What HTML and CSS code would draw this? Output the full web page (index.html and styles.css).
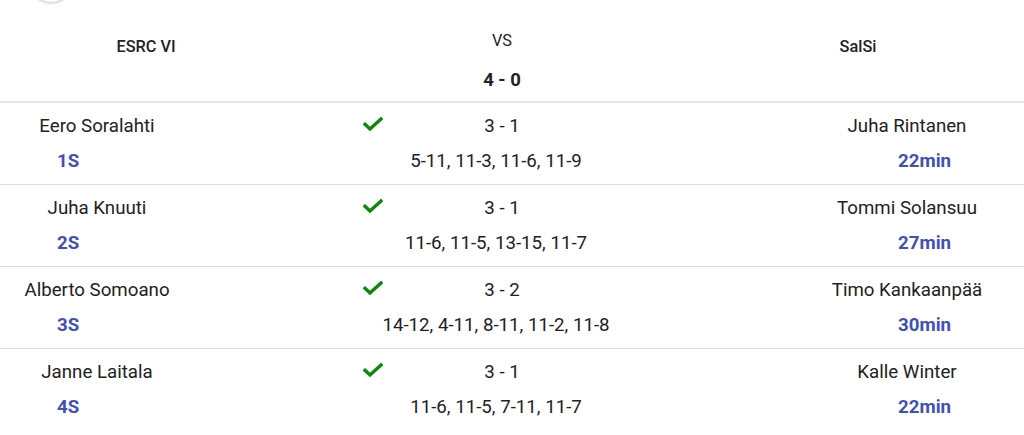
FILE: index.html
```html
<!DOCTYPE html>
<html>
<head>
<meta charset="utf-8">
<link rel="stylesheet" href="styles.css">
</head>
<body>
<div class="page">
  <div class="fab"></div>
  <div class="head">
    <div class="team">ESRC VI</div>
    <div class="mid">
      <div class="vs">VS</div>
      <div class="total">4 - 0</div>
    </div>
    <div class="team">SalSi</div>
  </div>

  <div class="row">
    <div class="side left">
      <div class="name">Eero Soralahti</div>
      <div class="tag">1S</div>
    </div>
    <div class="center">
      <div class="result">
        <svg class="check" viewBox="0 0 20 15"><polyline points="2,7.3 7,12 18,2"/></svg>
        <span class="sets">3 - 1</span>
        <span></span>
      </div>
      <div class="points">5-11, 11-3, 11-6, 11-9</div>
    </div>
    <div class="side right">
      <div class="name">Juha Rintanen</div>
      <div class="tag">22min</div>
    </div>
  </div>

  <div class="row">
    <div class="side left">
      <div class="name">Juha Knuuti</div>
      <div class="tag">2S</div>
    </div>
    <div class="center">
      <div class="result">
        <svg class="check" viewBox="0 0 20 15"><polyline points="2,7.3 7,12 18,2"/></svg>
        <span class="sets">3 - 1</span>
        <span></span>
      </div>
      <div class="points">11-6, 11-5, 13-15, 11-7</div>
    </div>
    <div class="side right">
      <div class="name">Tommi Solansuu</div>
      <div class="tag">27min</div>
    </div>
  </div>

  <div class="row">
    <div class="side left">
      <div class="name">Alberto Somoano</div>
      <div class="tag">3S</div>
    </div>
    <div class="center">
      <div class="result">
        <svg class="check" viewBox="0 0 20 15"><polyline points="2,7.3 7,12 18,2"/></svg>
        <span class="sets">3 - 2</span>
        <span></span>
      </div>
      <div class="points">14-12, 4-11, 8-11, 11-2, 11-8</div>
    </div>
    <div class="side right">
      <div class="name">Timo Kankaanpää</div>
      <div class="tag">30min</div>
    </div>
  </div>

  <div class="row last">
    <div class="side left">
      <div class="name">Janne Laitala</div>
      <div class="tag">4S</div>
    </div>
    <div class="center">
      <div class="result">
        <svg class="check" viewBox="0 0 20 15"><polyline points="2,7.3 7,12 18,2"/></svg>
        <span class="sets">3 - 1</span>
        <span></span>
      </div>
      <div class="points">11-6, 11-5, 7-11, 11-7</div>
    </div>
    <div class="side right">
      <div class="name">Kalle Winter</div>
      <div class="tag">22min</div>
    </div>
  </div>
</div>
</body>
</html>
```

FILE: styles.css
```css
* { box-sizing: border-box; }
html, body {
  margin: 0;
  padding: 0;
  background: #fff;
}
body {
  font-family: Roboto, "Noto Sans", "Liberation Sans", sans-serif;
  color: #222;
  overflow: hidden;
}
.page {
  position: relative;
  width: 1024px;
}
.fab {
  position: absolute;
  top: -44px;
  left: 28px;
  width: 46px;
  height: 46px;
  border-radius: 50%;
  background: #fff;
  box-shadow: 0 1px 3px rgba(0,0,0,0.25);
}
.head {
  display: grid;
  grid-template-columns: 292px 420px 292px;
  height: 103px;
  border-bottom: 2px solid #e8e8e8;
}
.team {
  text-align: center;
  font-size: 16.3px;
  font-weight: 500;
  padding-top: 36px;
  line-height: 22px;
}
.mid {
  text-align: center;
  padding-top: 30px;
}
.vs {
  font-size: 16.3px;
  font-weight: 400;
  line-height: 22px;
}
.total {
  font-size: 18.5px;
  font-weight: 700;
  line-height: 24px;
  margin-top: 16px;
}
.row {
  display: grid;
  grid-template-columns: 194px 616px 194px;
  padding: 6px 0 5px;
  border-bottom: 1px solid #dcdcdc;
}
.row.last { border-bottom: none; }
.name {
  font-size: 18.7px;
  line-height: 35px;
  text-align: center;
}
.tag {
  font-size: 18.7px;
  font-weight: 700;
  line-height: 35px;
  color: #3f51b5;
}
.left .tag { padding-left: 57px; }
.right .tag { padding-left: 88px; }
.result {
  display: grid;
  grid-template-columns: 1fr auto 1fr;
  align-items: center;
  height: 35px;
}
.check {
  justify-self: end;
  width: 20px;
  height: 15px;
  margin-right: 101px;
  margin-top: -4px;
  fill: none;
  stroke: #0a8a0a;
  stroke-width: 3.4;
  stroke-linecap: square;
  stroke-linejoin: miter;
}
.sets {
  font-size: 18.7px;
  line-height: 35px;
}
.points {
  font-size: 18.7px;
  line-height: 35px;
  text-align: center;
  padding-right: 12px;
}
```
